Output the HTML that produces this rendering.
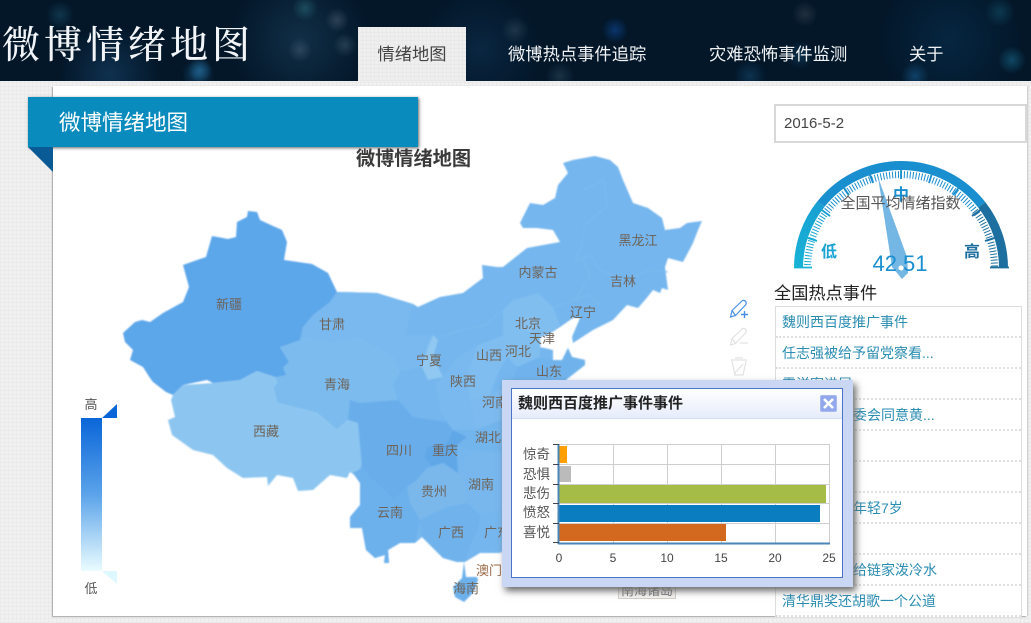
<!DOCTYPE html>
<html lang="zh">
<head>
<meta charset="utf-8">
<title>微博情绪地图</title>
<style>
html,body{margin:0;padding:0;width:1031px;height:623px;overflow:hidden}
body{position:relative;font-family:"Liberation Sans","Noto Sans CJK SC",sans-serif;
background-color:#f1f1f1;
background-image:repeating-linear-gradient(0deg,#eaeaea 0,#eaeaea 1px,transparent 1px,transparent 4px),repeating-linear-gradient(90deg,#eaeaea 0,#eaeaea 1px,transparent 1px,transparent 4px);}
.abs{position:absolute}
#hd{left:0;top:0;width:1031px;height:81px;background-color:#031729;
background-image:
radial-gradient(circle 12px at 200px 70px,rgba(40,120,170,.55),transparent),
radial-gradient(circle 16px at 198px 74px,rgba(40,130,190,.4),transparent),
radial-gradient(circle 14px at 60px 15px,rgba(40,110,140,.35),transparent),
radial-gradient(circle 13px at 305px 8px,rgba(60,150,160,.35),transparent),
radial-gradient(circle 12px at 337px 20px,rgba(130,140,160,.3),transparent),
radial-gradient(circle 12px at 300px 50px,rgba(110,130,150,.3),transparent),
radial-gradient(circle 12px at 345px 45px,rgba(100,130,150,.3),transparent),
radial-gradient(circle 13px at 615px 30px,rgba(20,90,190,.45),transparent),
radial-gradient(circle 14px at 800px 55px,rgba(30,90,130,.4),transparent),
radial-gradient(circle 13px at 805px 14px,rgba(110,110,120,.28),transparent),
radial-gradient(circle 14px at 1012px 60px,rgba(30,130,170,.45),transparent),
radial-gradient(circle 15px at 1000px 12px,rgba(30,120,150,.32),transparent),
radial-gradient(circle 14px at 915px 76px,rgba(30,110,170,.45),transparent),
radial-gradient(circle 16px at 750px 76px,rgba(30,100,150,.35),transparent),
radial-gradient(circle 14px at 515px 30px,rgba(90,120,130,.28),transparent),
radial-gradient(circle 14px at 560px 76px,rgba(80,110,130,.3),transparent),
radial-gradient(circle 50px at 110px 75px,rgba(25,70,110,.55),transparent),
radial-gradient(circle 70px at 300px 40px,rgba(30,70,100,.5),transparent),
radial-gradient(circle 60px at 480px 50px,rgba(20,60,100,.4),transparent),
radial-gradient(circle 70px at 950px 40px,rgba(10,60,100,.4),transparent);}
#logo{left:2px;top:12px;font:500 38px/60px "Noto Serif CJK SC","Liberation Serif",serif;letter-spacing:4px;color:#f2f5f7;white-space:nowrap}
.nav{top:27px;height:54px;line-height:54px;font-size:17.3px;color:#f0f2f4;white-space:nowrap}
#tab{left:358px;width:108px;text-align:center;color:#444;background-color:#efefef;
background-image:repeating-linear-gradient(0deg,#e9e9e9 0,#e9e9e9 1px,transparent 1px,transparent 4px),repeating-linear-gradient(90deg,#e9e9e9 0,#e9e9e9 1px,transparent 1px,transparent 4px)}
#panel{left:53px;top:86px;width:974px;height:530px;background:#fff;box-shadow:-1px 1px 1px #a8a8a8,1px 0 1px #ccc}
#ribbon{left:28px;top:97px;width:390px;height:50px;background:#0a8bbd;box-shadow:1px 1px 3px #666;color:#fff;font-size:21.5px;line-height:52px;text-indent:31px;white-space:nowrap}
#maptitle{left:300px;top:148px;width:227px;text-align:center;font-size:19.2px;font-weight:bold;color:#3a3a3a;line-height:24px;white-space:nowrap}
#date{left:774px;top:104px;width:249px;height:35px;border:2px solid #d8d8d8;background:#fff;font-size:15px;line-height:35px;text-indent:8px;color:#444}
#hot{left:774px;top:282px;font-size:17.2px;line-height:23px;color:#222;white-space:nowrap}
#list{left:775px;top:306px;width:245px;height:310px;border:1px solid #ddd;border-bottom:0;background:#fff}
#list div{height:29px;line-height:31px;border-bottom:2px dotted #e0e0e0;font-size:14px;color:#2b8db2;padding-left:6px;white-space:nowrap;overflow:hidden}
#dlg{left:502px;top:380px;width:351px;height:207px;background:#c9d7f5;box-shadow:3px 4px 7px #6a6a6a}
#inner{left:9px;top:8px;width:330px;height:188px;border:1px solid #4a74c9;background:#fff}
#dh{left:0;top:0;width:330px;height:29px;background:linear-gradient(#fff,#e6ecfb);border-bottom:1px solid #d5dff5;font-size:15px;font-weight:bold;line-height:29px;text-indent:6px;color:#222;white-space:nowrap}
#map,#gauge{left:0;top:0}
svg text{font-family:"Liberation Sans","Noto Sans CJK SC",sans-serif}
</style>
</head>
<body>
<div class="abs" id="hd"></div>
<div class="abs" id="logo">微博情绪地图</div>
<div class="abs" id="panel"></div>
<div class="abs nav" id="tab">情绪地图</div>
<div class="abs nav" style="left:508px">微博热点事件追踪</div>
<div class="abs nav" style="left:709px">灾难恐怖事件监测</div>
<div class="abs nav" style="left:909px">关于</div>

<svg class="abs" id="map" width="1031" height="623" viewBox="0 0 1031 623">
<defs>
<linearGradient id="lg" x1="0" y1="0" x2="0" y2="1"><stop offset="0" stop-color="#0a66d8"/><stop offset=".5" stop-color="#5ba3ea"/><stop offset="1" stop-color="#eafcff"/></linearGradient>
<filter id="soft" x="-5%" y="-5%" width="110%" height="110%"><feGaussianBlur stdDeviation="0.7"/></filter>
</defs>
<g filter="url(#soft)">
<!-- mainland base -->
<polygon fill="#74b6ee" points="337,292 342,292 377,293 413,304 418,307 440,297 463,293 483,278 482,265 497,267 503,267 527,248 560,242 553,230 537,228 523,228 520,223 530,203 543,205 555,198 558,185 568,173 563,163 573,160 595,156 610,160 618,167 623,180 633,203 648,208 662,218 665,230 680,228 687,223 702,221 698,230 693,243 683,262 668,258 665,267 668,290 662,288 660,293 653,290 645,300 638,308 627,305 613,320 593,330 573,343 572,337 580,318 573,318 560,327 543,338 540,347 553,350 553,360 562,360 568,348 572,357 585,360 585,365 567,379 560,390 590,440 560,520 500,553 480,553 465,562 457,562 443,558 435,550 422,537 415,543 400,543 388,550 389,563 384,563 385,555 375,558 366,550 362,528 350,528 350,517 360,505 360,483 353,473 358,423 348,420 300,340 303,327 313,315 330,302"/>
<!-- Hainan -->
<polygon fill="#6cb0ec" points="464,562 466,577 477,577 478,580 473,593 464,602 455,597 453,587 462,578"/>
<!-- Gansu tint -->
<polygon fill="#79b9ef" points="342,292 377,293 413,304 405,335 433,335 422,367 400,372 393,357 377,347 360,338 333,342 303,337 303,327 313,315 330,302"/>
<!-- Qinghai -->
<polygon fill="#7cbbee" points="280,347 303,337 333,342 360,338 377,347 393,357 400,372 393,385 398,400 360,403 350,400 348,420 337,430 317,413 277,403 273,387 277,383 275,377 283,368 289,362"/>
<!-- Tibet -->
<polygon fill="#8cc6f0" points="171,400 175,417 168,420 172,435 193,450 213,455 227,468 243,478 267,477 268,486 277,475 293,478 298,491 313,490 330,475 347,478 350,472 357,477 362,463 358,423 348,420 337,430 317,413 277,403 273,387 277,383 275,377 257,371 240,380 213,383 183,385 173,395"/>
<!-- Xinjiang -->
<polygon fill="#5ca6ea" points="248,211 257,212 260,220 273,226 282,230 287,242 284,260 312,264 328,273 337,292 330,302 313,315 303,327 300,340 280,347 289,362 283,368 286,375 275,377 257,371 240,380 213,383 207,380 183,385 173,395 166,392 153,382 150,378 143,367 130,360 133,350 125,342 123,333 135,322 142,320 150,322 163,313 183,302 189,287 183,265 200,259 206,257 212,236 228,239 236,237 237,222 247,217"/>
<!-- Sichuan -->
<polygon fill="#69adea" points="350,400 360,403 398,400 413,417 447,422 453,430 467,437 457,445 457,460 458,473 443,463 427,468 417,480 407,487 393,500 385,490 373,480 362,468 358,423 348,420"/>
<!-- Chongqing -->
<polygon fill="#60a7e8" points="453,430 467,437 457,445 457,460 458,473 443,463 433,468 425,458 427,447 447,444"/>
<!-- Yunnan -->
<polygon fill="#6cb0ec" points="362,468 373,480 385,490 393,500 407,487 410,503 420,520 415,543 400,543 388,550 389,563 384,563 385,555 375,558 366,550 362,528 350,528 350,517 360,505 360,483 353,473"/>
<!-- Guizhou -->
<polygon fill="#7ab8ec" points="427,468 443,463 458,473 463,477 467,503 447,507 420,520 410,503 407,487 417,480"/>
<!-- Guangxi -->
<polygon fill="#6fb2ec" points="420,520 447,507 467,503 480,515 478,530 470,545 465,562 457,562 443,558 435,550 422,537"/>
<!-- Hunan -->
<polygon fill="#77b7ee" points="458,473 470,450 502,452 502,508 480,515 467,503 463,477"/>
<!-- Hubei -->
<polygon fill="#72b4ec" points="453,430 475,430 502,420 502,452 470,450 457,445 467,437"/>
<!-- Henan -->
<polygon fill="#7bbaef" points="490,395 510,385 502,420 475,430 470,400"/>
<!-- Shaanxi -->
<polygon fill="#79b9ef" points="478,345 468,375 470,400 475,430 453,430 447,422 440,410 435,385 443,377 455,360"/>
<!-- Shanxi -->
<polygon fill="#7fbdf0" points="505,335 507,357 497,375 490,395 470,400 468,375 478,345"/>
<!-- Hebei -->
<polygon fill="#80bef0" points="503,310 513,300 538,293 553,307 560,325 543,338 540,347 540,357 517,367 507,357 503,337"/>
<!-- Shandong -->
<polygon fill="#70b3ec" points="517,367 537,358 553,360 562,360 568,348 572,357 585,360 585,365 567,379 560,390 510,390"/>
<!-- Ningxia -->
<polygon fill="#90c8f2" points="433,335 438,340 433,357 443,377 428,380 422,367 428,347"/>
<!-- Beijing -->
<polygon fill="#86c1f1" points="522,318 535,316 540,325 530,332 520,328"/>
<polygon fill="#ffffff" points="540,338 545,335 546,345 541,347"/>
<!-- borders -->
<g fill="none" stroke="#7dbbf0" stroke-width="1">
<polyline points="583,190 603,180 608,205 585,225 582,245 575,262 590,255 600,270 625,280 650,270 668,272"/>
<polyline points="553,307 575,300 590,275 582,258"/>
<polyline points="600,305 588,295 575,300"/>
<polyline points="503,310 485,325 462,330 440,337"/>
</g>
</g>

<!-- map labels -->
<g font-size="13" fill="#6e6358" text-anchor="middle">
<text x="229" y="309">新疆</text>
<text x="332" y="329">甘肃</text>
<text x="337" y="389">青海</text>
<text x="266" y="436">西藏</text>
<text x="429" y="365">宁夏</text>
<text x="463" y="386">陕西</text>
<text x="489" y="360">山西</text>
<text x="518" y="356">河北</text>
<text x="528" y="328">北京</text>
<text x="542" y="343">天津</text>
<text x="583" y="317">辽宁</text>
<text x="623" y="286">吉林</text>
<text x="638" y="245">黑龙江</text>
<text x="538" y="277">内蒙古</text>
<text x="549" y="376">山东</text>
<text x="495" y="407">河南</text>
<text x="488" y="442">湖北</text>
<text x="399" y="455">四川</text>
<text x="445" y="455">重庆</text>
<text x="434" y="496">贵州</text>
<text x="481" y="489">湖南</text>
<text x="390" y="517">云南</text>
<text x="451" y="537">广西</text>
<text x="497" y="537">广东</text>
<text x="489" y="575" fill="#9a6a48">澳门</text>
<text x="466" y="593">海南</text>
</g>
<rect x="618.5" y="580.5" width="57" height="18" fill="#f6f4f2" stroke="#d4cfc8"/>
<text x="647" y="595" font-size="13" fill="#777" text-anchor="middle">南海诸岛</text>

<!-- legend -->
<rect x="81" y="418" width="21" height="153" fill="url(#lg)"/>
<polygon points="102,418 117,418 117,404" fill="#0a66d8"/>
<polygon points="102,571 117,571 117,584" fill="#def8ff"/>
<text x="91" y="409" font-size="13" fill="#555" text-anchor="middle">高</text>
<text x="91" y="593" font-size="13" fill="#555" text-anchor="middle">低</text>

<!-- tool icons -->
<g fill="none" stroke="#4a8fe6" stroke-width="1.2">
<path d="M730.5 317 L732 310.5 L742.5 300.5 Q745 300 746 302 Q746.5 304 745.5 305 L735.5 315.5 Z"/>
<path d="M732 310.5 L735.5 315.5"/>
<path d="M741 314.5 H748 M744.5 311 V318" stroke-width="1.4"/>
</g>
<g fill="none" stroke="#e2e2e2" stroke-width="1.2">
<path d="M730.5 345 L732 338.5 L742.5 328.5 Q745 328 746 330 Q746.5 332 745.5 333 L735.5 343.5 Z"/>
<path d="M732 338.5 L735.5 343.5"/>
<path d="M740 343 H748"/>
<path d="M731 360 H747 M735 358 H743 M732 361 L735 375 H743 L746 361"/>
<path d="M735 373 L743 364"/>
</g>
</svg>

<div class="abs" id="ribbon">微博情绪地图</div>
<svg class="abs" style="left:28px;top:147px" width="25" height="25"><polygon points="0,0 25,0 25,25" fill="#0a5a96"/></svg>
<div class="abs" id="maptitle">微博情绪地图</div>

<div class="abs" id="date">2016-5-2</div>

<!-- gauge -->
<svg class="abs" id="gauge" width="1031" height="300" viewBox="0 0 1031 300" style="pointer-events:none">
<defs>
<linearGradient id="gl" gradientUnits="userSpaceOnUse" x1="793" y1="268" x2="870" y2="170"><stop offset="0" stop-color="#17b3d6"/><stop offset="1" stop-color="#1a8fcf"/></linearGradient>
</defs>
<g fill="none">
<path d="M798.5 268 A102.5 102.5 0 0 1 821.0 204.0" stroke="url(#gl)" stroke-width="9"/>
<path d="M821.0 204.0 A102.5 102.5 0 0 1 981.8 204.9" stroke="#1a8fcf" stroke-width="9"/>
<path d="M981.8 204.9 A102.5 102.5 0 0 1 1003.5 268" stroke="#1c6f9f" stroke-width="9"/>
<path d="M807.5 268 A93.5 93.5 0 0 1 827 211" stroke="url(#gl)" stroke-width="7" stroke-dasharray="1 1.94"/>
<path d="M827 211 A93.5 93.5 0 0 1 975 211" stroke="#1a8fcf" stroke-width="7" stroke-dasharray="1 1.94"/>
<path d="M975 211 A93.5 93.5 0 0 1 994.5 268" stroke="#1c6f9f" stroke-width="7" stroke-dasharray="1 1.94"/>
</g>
<g stroke-width="1.8">
<line x1="794" y1="267.5" x2="812" y2="267.5" stroke="#17b3d6"/>
<line x1="805" y1="237" x2="817" y2="241" stroke="#17aed6"/>
<line x1="819" y1="208" x2="830" y2="216" stroke="#19a2d3"/>
<line x1="842" y1="185" x2="849" y2="195" stroke="#1a8fcf"/>
<line x1="868" y1="170" x2="873" y2="183" stroke="#1a8fcf"/>
<line x1="901" y1="165" x2="901" y2="179" stroke="#1a8fcf"/>
<line x1="933" y1="170" x2="929" y2="183" stroke="#1a8fcf"/>
<line x1="961" y1="185" x2="953" y2="195" stroke="#1a8fcf"/>
<line x1="983" y1="208" x2="972" y2="216" stroke="#1c6f9f"/>
<line x1="997" y1="237" x2="985" y2="241" stroke="#1c6f9f"/>
<line x1="990" y1="267.5" x2="1009" y2="267.5" stroke="#1c6f9f"/>
</g>
<text x="829" y="257" font-size="16" font-weight="bold" fill="#1aa3d3" text-anchor="middle">低</text>
<text x="901" y="200" font-size="16" font-weight="bold" fill="#1a8fcf" text-anchor="middle">中</text>
<text x="972" y="257" font-size="16" font-weight="bold" fill="#1c6f9f" text-anchor="middle">高</text>
<polygon points="878,177 907,257 908,273 902,279 892,267" fill="#74b6e4"/>
<text x="900.5" y="208" font-size="15" fill="#555" text-anchor="middle">全国平均情绪指数</text>
<text x="900" y="271" font-size="22" fill="#1a8fcf" text-anchor="middle">42.51</text>
<circle cx="901" cy="268" r="2.6" fill="#fff"/>
</svg>

<div class="abs" id="hot">全国热点事件</div>
<div class="abs" id="list">
<div>魏则西百度推广事件</div>
<div>任志强被给予留党察看...</div>
<div>雷洋案进展</div>
<div style="padding-left:77px">委会同意黄...</div>
<div></div>
<div></div>
<div style="padding-left:77px">年轻7岁</div>
<div></div>
<div style="padding-left:77px">给链家泼冷水</div>
<div>清华鼎奖还胡歌一个公道</div>
</div>

<!-- dialog -->
<div class="abs" id="dlg">
<div class="abs" id="inner">
<div class="abs" id="dh">魏则西百度推广事件事件</div>
<svg class="abs" style="left:308px;top:6px" width="17" height="17" viewBox="0 0 17 17">
<rect width="16" height="16" x=".5" y=".5" rx="1.5" fill="#93a8ec" stroke="#a9b9ef"/>
<path d="M4 4 L13 13 M13 4 L4 13" stroke="#fff" stroke-width="2.6"/>
</svg>
</div>
</div>
<svg class="abs" style="left:0;top:0" width="1031" height="623" viewBox="0 0 1031 623">
<g stroke="#cfcfcf" stroke-width="1" fill="none">
<path d="M613.5 444 V543 M667.5 444 V543 M721.5 444 V543 M775.5 444 V543 M829.5 444 V543"/>
<path d="M559 444.5 H830 M559 464.5 H830 M559 484.5 H830 M559 503.5 H830 M559 523.5 H830"/>
</g>
<rect x="559" y="446" width="8" height="17" fill="#ff9f00"/>
<rect x="559" y="466" width="12" height="16" fill="#bbbbbb"/>
<rect x="559" y="485" width="267" height="18" fill="#a5bd47"/>
<rect x="559" y="505" width="261" height="17" fill="#0a7cc0"/>
<rect x="559" y="524" width="167" height="17" fill="#d2691e"/>
<g stroke="#4a86b8" fill="none">
<path d="M558.5 444 V544 M558 543.5 H830" stroke-width="2"/>
<path d="M553 444.5 H559 M553 464.5 H559 M553 484.5 H559 M553 503.5 H559 M553 523.5 H559 M553 542.5 H559" stroke="#445" stroke-width="1"/>
</g>
<g font-size="13.5" fill="#555" text-anchor="end">
<text x="550" y="459">惊奇</text>
<text x="550" y="479">恐惧</text>
<text x="550" y="498">悲伤</text>
<text x="550" y="517">愤怒</text>
<text x="550" y="537">喜悦</text>
</g>
<g font-size="12" fill="#444" text-anchor="middle">
<text x="559" y="562">0</text>
<text x="613" y="562">5</text>
<text x="667" y="562">10</text>
<text x="721" y="562">15</text>
<text x="775" y="562">20</text>
<text x="829" y="562">25</text>
</g>
</svg>
</body>
</html>
